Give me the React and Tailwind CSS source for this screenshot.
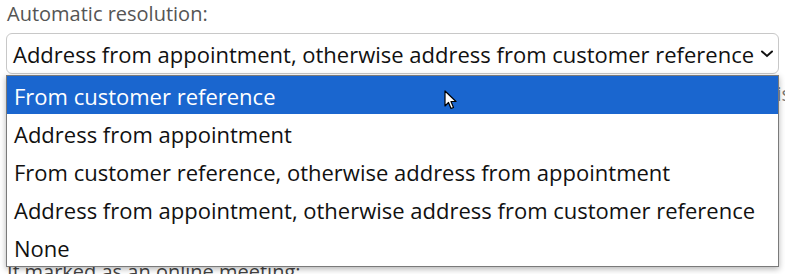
import React from "react";

const options = [
  "From customer reference",
  "Address from appointment",
  "From customer reference, otherwise address from appointment",
  "Address from appointment, otherwise address from customer reference",
  "None",
];

function Cursor() {
  return (
    <svg width="14" height="20" viewBox="0 0 14 20" className="absolute left-[444px] top-[90px]">
      <path d="M1 1 L1 16 L4.5 12.5 L7 18.5 L9.5 17.5 L7 11.5 L12 11.5 Z" fill="#fff" stroke="#000" strokeWidth="1.2" strokeLinejoin="round" />
    </svg>
  );
}

export default function App() {
  return (
    <div className="relative w-[785px] h-[274px] overflow-hidden bg-white font-['Open_Sans',sans-serif]">
      <div className="pl-[7px] pt-[0px] text-[20px] text-[#555] leading-[28px]">Automatic resolution:</div>
      <div className="ml-[6px] mt-[5px] w-[773px] h-[41px] border border-[#c8c8c8] rounded-[6px] flex items-center justify-between pl-[6px] pr-[4px] text-[22px] text-[#111] whitespace-nowrap">
        <span className="pt-[1px]">Address from appointment, otherwise address from customer reference</span>
        <svg width="14" height="10" viewBox="0 0 14 10" className="shrink-0">
          <path d="M2 2.5 L7 7 L12 2.5" fill="none" stroke="#111" strokeWidth="2" strokeLinecap="round" />
        </svg>
      </div>
      <div className="relative">
        <div className="flex justify-end pt-[6px] pr-[0px] text-[20px] text-[#777] leading-[28px] whitespace-nowrap">
          <span className="-mr-[6px]">is</span>
        </div>
        <div className="pl-[7px] mt-[150px] text-[20px] text-[#444] leading-[28px] whitespace-nowrap">If marked as an online meeting:</div>
        <div className="absolute left-[6px] top-[1px] w-[773px] border border-[#7a7a7a] bg-white shadow-[0_2px_6px_rgba(0,0,0,0.3)]">
          {options.map((o, i) => (
            <div
              key={o}
              className={
                "h-[38px] flex items-center pl-[7px] pt-[2px] text-[22px] whitespace-nowrap " +
                (i === 0 ? "bg-[#1a66cf] text-white" : "text-[#111]")
              }
            >
              {o}
            </div>
          ))}
        </div>
      </div>
      <Cursor />
    </div>
  );
}
